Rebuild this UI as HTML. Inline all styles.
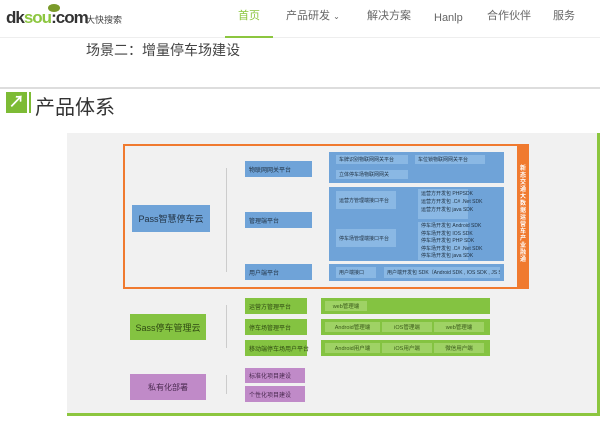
<!DOCTYPE html>
<html><head><meta charset="utf-8"><style>
*{margin:0;padding:0;box-sizing:border-box}
body{width:600px;height:444px;background:#fff;position:relative;overflow:hidden;font-family:"Liberation Sans","Noto Sans CJK SC",sans-serif}
.a{position:absolute}
.nav{font-size:11px;color:#666;top:8px;line-height:16px}
.b{position:absolute;background:#6fa3d8;color:#234;font-size:6px;display:flex;align-items:center;padding-left:4px;white-space:nowrap}
.g{position:absolute;background:#84c341;color:#2f4a12;font-size:6px;display:flex;align-items:center;padding-left:4px;white-space:nowrap}
.gl{position:absolute;background:#9fd265;color:#3a5a1a;font-size:5.5px;display:flex;align-items:center;justify-content:center}
.p{position:absolute;background:#c08ac8;color:#4a2a50;font-size:6px;display:flex;align-items:center;padding-left:4px}
.bl{position:absolute;background:#8ab8e4;color:#234;font-size:5px;display:flex;align-items:center;padding-left:3px;white-space:nowrap}
</style></head><body>
<div class="a" style="left:0;top:0;width:600px;height:38px;border-bottom:1px solid #eee"></div>
<div class="a" style="left:6px;top:8px;font-size:17px;font-weight:bold;color:#333;letter-spacing:-1px">dk<span style="color:#8cc63f">sou</span>:com</div>
<div class="a" style="left:48px;top:4px;width:12px;height:8px;background:#7a9a2a;border-radius:50%"></div>
<div class="a" style="left:86px;top:13px;font-size:9px;color:#444">大快搜索</div>
<div class="a nav" style="left:238px;color:#8cc63f">首页</div>
<div class="a" style="left:225px;top:36px;width:48px;height:2px;background:#8cc63f"></div>
<div class="a nav" style="left:286px">产品研发 <span style="font-size:8px">⌄</span></div>
<div class="a nav" style="left:367px">解决方案</div>
<div class="a nav" style="left:434px;top:10px">Hanlp</div>
<div class="a nav" style="left:487px">合作伙伴</div>
<div class="a nav" style="left:553px">服务</div>
<div class="a" style="left:86px;top:40px;font-size:14px;color:#444">场景二：增量停车场建设</div>
<div class="a" style="left:0;top:87px;width:600px;height:2px;background:#ddd"></div>
<div class="a" style="left:6px;top:92px;width:21px;height:21px;background:#7dbb35;color:#fff;font-size:16px;font-weight:bold;text-align:center;line-height:21px">↗</div>
<div class="a" style="left:29px;top:92px;width:2px;height:21px;background:#7dbb35"></div>
<div class="a" style="left:35px;top:91px;font-size:20px;color:#333">产品体系</div>
<div class="a" style="left:67px;top:133px;width:533px;height:283px;background:#f1f1f1;border-right:3px solid #8cc63f;border-bottom:3px solid #8cc63f"></div>
<div class="a" style="left:123px;top:144px;width:406px;height:145px;border:2px solid #f07a2f"></div>
<div class="a" style="left:517px;top:144px;width:12px;height:145px;background:#f07a2f;color:#fff;font-size:6px;line-height:7px;text-align:center;padding-top:22px;font-weight:bold">新<br>态<br>交<br>通<br>大<br>数<br>据<br>运<br>营<br>车<br>产<br>业<br>融<br>通</div>
<div class="b" style="left:132px;top:205px;width:78px;height:27px;font-size:9px;justify-content:center;padding:0">Pass智慧停车云</div>
<div class="b" style="left:245px;top:161px;width:67px;height:16px">物联网网关平台</div>
<div class="b" style="left:245px;top:212px;width:67px;height:16px">管理端平台</div>
<div class="b" style="left:245px;top:264px;width:67px;height:16px">用户端平台</div>
<div class="b" style="left:329px;top:152px;width:175px;height:31px"></div>
<div class="bl" style="left:336px;top:155px;width:72px;height:9px">车牌识别物联网网关平台</div>
<div class="bl" style="left:415px;top:155px;width:70px;height:9px">车位锁物联网网关平台</div>
<div class="bl" style="left:336px;top:170px;width:72px;height:9px">立体停车场物联网网关</div>
<div class="b" style="left:329px;top:187px;width:175px;height:74px"></div>
<div class="bl" style="left:336px;top:191px;width:60px;height:18px">运营方管理端接口平台</div>
<div class="bl" style="left:336px;top:229px;width:60px;height:18px">停车场管理端接口平台</div>
<div class="bl" style="left:418px;top:189px;width:50px;height:30px;display:block;line-height:8px;padding-top:1px">运营方开发包 PHPSDK<br>运营方开发包 .C# .Net SDK<br>运营方开发包 java SDK</div>
<div class="bl" style="left:418px;top:222px;width:50px;height:38px;display:block;line-height:7.5px;padding-top:1px">停车场开发包 Android SDK<br>停车场开发包 IOS SDK<br>停车场开发包 PHP SDK<br>停车场开发包 .C# .Net SDK<br>停车场开发包 java SDK</div>
<div class="b" style="left:329px;top:264px;width:175px;height:17px"></div>
<div class="bl" style="left:336px;top:267px;width:40px;height:11px">用户端接口</div>
<div class="bl" style="left:384px;top:267px;width:116px;height:11px;overflow:hidden">用户端开发包 SDK（Android SDK , IOS SDK , JS SDK）</div>
<div class="g" style="left:130px;top:314px;width:76px;height:26px;font-size:9px;justify-content:center;padding:0">Sass停车管理云</div>
<div class="g" style="left:245px;top:298px;width:62px;height:16px">运营方管理平台</div>
<div class="g" style="left:245px;top:319px;width:62px;height:16px">停车场管理平台</div>
<div class="g" style="left:245px;top:340px;width:62px;height:16px">移动端停车场用户平台</div>
<div class="g" style="left:321px;top:298px;width:169px;height:16px"></div>
<div class="g" style="left:321px;top:319px;width:169px;height:16px"></div>
<div class="g" style="left:321px;top:340px;width:169px;height:16px"></div>
<div class="gl" style="left:325px;top:301px;width:42px;height:10px">web管理端</div>
<div class="gl" style="left:325px;top:322px;width:55px;height:10px">Android管理端</div>
<div class="gl" style="left:382px;top:322px;width:50px;height:10px">iOS管理端</div>
<div class="gl" style="left:434px;top:322px;width:50px;height:10px">web管理端</div>
<div class="gl" style="left:325px;top:343px;width:55px;height:10px">Android用户端</div>
<div class="gl" style="left:382px;top:343px;width:50px;height:10px">iOS用户端</div>
<div class="gl" style="left:434px;top:343px;width:50px;height:10px">微信用户端</div>
<div class="p" style="left:130px;top:374px;width:76px;height:26px;font-size:8px;justify-content:center;padding:0">私有化部署</div>
<div class="p" style="left:245px;top:368px;width:60px;height:15px">标准化项目建设</div>
<div class="p" style="left:245px;top:386px;width:60px;height:16px">个性化项目建设</div>
<div class="a" style="left:226px;top:168px;width:1px;height:104px;background:#ccc"></div>
<div class="a" style="left:226px;top:305px;width:1px;height:43px;background:#ccc"></div>
<div class="a" style="left:226px;top:375px;width:1px;height:19px;background:#ccc"></div>
</body></html>
